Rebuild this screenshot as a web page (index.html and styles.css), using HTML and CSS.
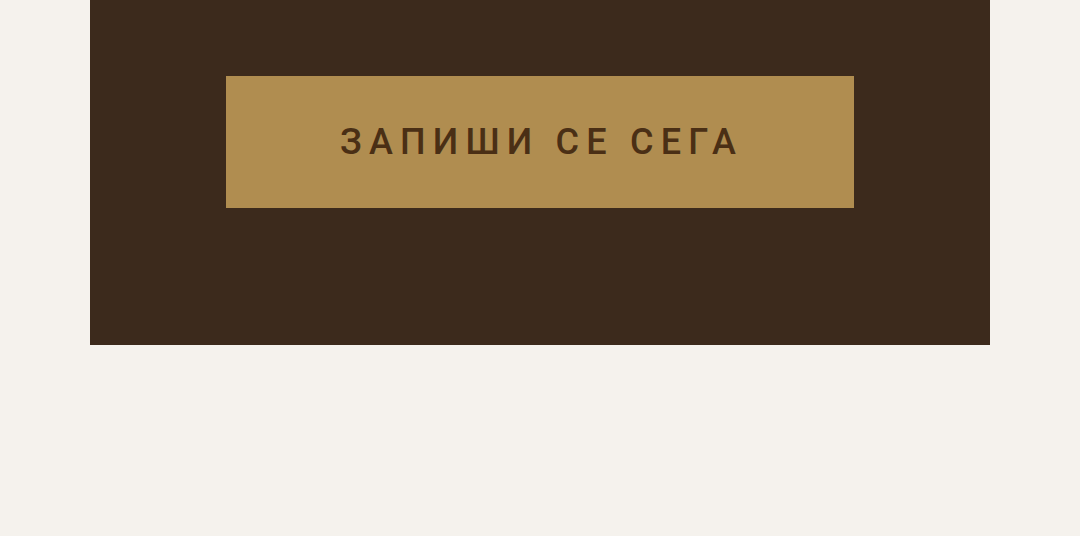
FILE: index.html
```html
<!DOCTYPE html>
<html lang="mk">
<head>
<meta charset="utf-8">
<link rel="stylesheet" href="styles.css">
</head>
<body>
<section class="cta">
  <a class="cta-button" href="#">ЗАПИШИ СЕ СЕГА</a>
</section>
</body>
</html>
```

FILE: styles.css
```css
html, body {
  margin: 0;
  padding: 0;
}
body {
  background: #f5f2ed;
  font-family: Roboto, "Noto Sans", sans-serif;
  height: 536px;
  overflow: hidden;
}
.cta {
  width: 900px;
  height: 345px;
  margin: 0 auto;
  background: #3c2a1c;
  box-sizing: border-box;
  padding-top: 76px;
  display: flex;
  justify-content: center;
  align-items: flex-start;
}
.cta-button {
  display: flex;
  align-items: center;
  justify-content: center;
  width: 628px;
  height: 132px;
  background: #b08d50;
  color: #4a2f15;
  text-decoration: none;
  font-size: 36px;
  font-weight: 500;
  letter-spacing: 7.2px;
  padding-left: 3px;
  box-sizing: border-box;
}
```
